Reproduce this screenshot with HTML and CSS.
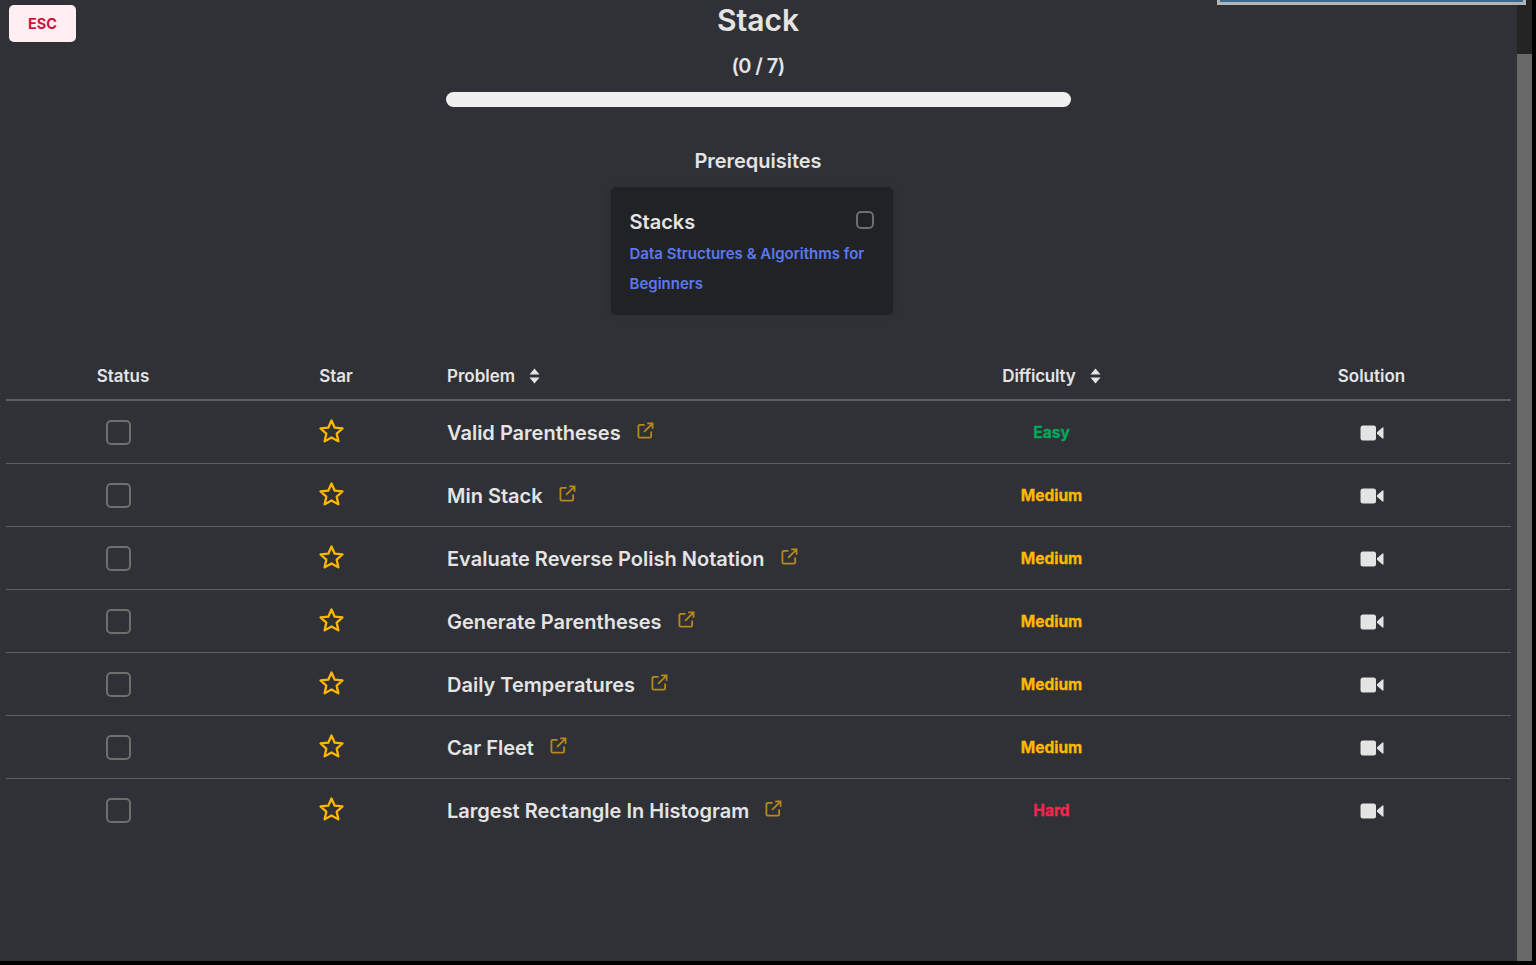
FILE: index.html
```html
<!DOCTYPE html>
<html lang="en">
<head>
    <meta charset="UTF-8">
    <title>Stack</title>
    <link rel="stylesheet" href="styles.css">
</head>
<body>
    <svg class="sprites" width="0" height="0">
        <symbol id="star" viewBox="0 0 26 26">
            <path d="M13 2.400l3.100 6.900 7.500.8-5.600 5 1.600 7.400-6.600-3.800-6.600 3.800 1.600-7.400-5.600-5 7.500-.8z" fill="none" stroke="#ffb800" stroke-width="2.200" stroke-linejoin="round"/>
        </symbol>
        <symbol id="link" viewBox="0 0 18 18">
            <path d="M8 3H3a1.500 1.500 0 0 0-1.500 1.500v10.500A1.500 1.500 0 0 0 3 16.500h10.500A1.500 1.500 0 0 0 15 15v-5M7.500 10.500L16 2M10.800 1.500h5.700v5.700" fill="none" stroke="#b8881c" stroke-width="1.900"/>
        </symbol>
        <symbol id="video" viewBox="0 0 24 16">
            <rect x="0.500" y="0.500" width="15.500" height="15" rx="2.500" fill="#e4e4e4"/>
            <path d="M17 7.300L22.500 2.500c.5-.4 1-.2 1 .5v10c0 .7-.5.9-1 .5L17 8.700z" fill="#e4e4e4"/>
        </symbol>
        <symbol id="sort" viewBox="0 0 11 16">
            <path d="M5.500 0.500L10.500 6.500H0.500zM5.500 15.500L0.500 9.500H10.500z" fill="#e4e4e4"/>
        </symbol>
    </svg>

    <div class="window">
        <div class="content">
            <div class="topbox"></div>
            <button class="esc">ESC</button>

            <h1>Stack</h1>
            <p class="count">(0 / 7)</p>
            <div class="progress"></div>

            <h2>Prerequisites</h2>
            <div class="cards">
                <div class="card">
                    <div class="card-head">
                        <span>Stacks</span>
                        <span class="check small"></span>
                    </div>
                    <a class="card-link">Data Structures &amp; Algorithms for Beginners</a>
                </div>
            </div>

            <table>
                <thead>
                    <tr>
                        <th class="col-status">Status</th>
                        <th class="col-star">Star</th>
                        <th class="col-problem">Problem <svg class="sort"><use href="#sort"/></svg></th>
                        <th class="col-diff">Difficulty <svg class="sort"><use href="#sort"/></svg></th>
                        <th class="col-sol">Solution</th>
                    </tr>
                </thead>
                <tbody>
                    <tr>
                        <td class="cell-status"><span class="check"></span></td>
                        <td class="cell-star"><svg class="star"><use href="#star"/></svg></td>
                        <td class="cell-problem">Valid Parentheses <svg class="link"><use href="#link"/></svg></td>
                        <td class="cell-diff easy">Easy</td>
                        <td class="cell-sol"><svg class="video"><use href="#video"/></svg></td>
                    </tr>
                    <tr>
                        <td class="cell-status"><span class="check"></span></td>
                        <td class="cell-star"><svg class="star"><use href="#star"/></svg></td>
                        <td class="cell-problem">Min Stack <svg class="link"><use href="#link"/></svg></td>
                        <td class="cell-diff medium">Medium</td>
                        <td class="cell-sol"><svg class="video"><use href="#video"/></svg></td>
                    </tr>
                    <tr>
                        <td class="cell-status"><span class="check"></span></td>
                        <td class="cell-star"><svg class="star"><use href="#star"/></svg></td>
                        <td class="cell-problem">Evaluate Reverse Polish Notation <svg class="link"><use href="#link"/></svg></td>
                        <td class="cell-diff medium">Medium</td>
                        <td class="cell-sol"><svg class="video"><use href="#video"/></svg></td>
                    </tr>
                    <tr>
                        <td class="cell-status"><span class="check"></span></td>
                        <td class="cell-star"><svg class="star"><use href="#star"/></svg></td>
                        <td class="cell-problem">Generate Parentheses <svg class="link"><use href="#link"/></svg></td>
                        <td class="cell-diff medium">Medium</td>
                        <td class="cell-sol"><svg class="video"><use href="#video"/></svg></td>
                    </tr>
                    <tr>
                        <td class="cell-status"><span class="check"></span></td>
                        <td class="cell-star"><svg class="star"><use href="#star"/></svg></td>
                        <td class="cell-problem">Daily Temperatures <svg class="link"><use href="#link"/></svg></td>
                        <td class="cell-diff medium">Medium</td>
                        <td class="cell-sol"><svg class="video"><use href="#video"/></svg></td>
                    </tr>
                    <tr>
                        <td class="cell-status"><span class="check"></span></td>
                        <td class="cell-star"><svg class="star"><use href="#star"/></svg></td>
                        <td class="cell-problem">Car Fleet <svg class="link"><use href="#link"/></svg></td>
                        <td class="cell-diff medium">Medium</td>
                        <td class="cell-sol"><svg class="video"><use href="#video"/></svg></td>
                    </tr>
                    <tr>
                        <td class="cell-status"><span class="check"></span></td>
                        <td class="cell-star"><svg class="star"><use href="#star"/></svg></td>
                        <td class="cell-problem">Largest Rectangle In Histogram <svg class="link"><use href="#link"/></svg></td>
                        <td class="cell-diff hard">Hard</td>
                        <td class="cell-sol"><svg class="video"><use href="#video"/></svg></td>
                    </tr>
                </tbody>
            </table>
        </div>
        <div class="scrollbar"><div class="thumb"></div></div>
    </div>
</body>
</html>
```

FILE: styles.css
```css
html, body {
    height: 100%;
}
body {
    margin: 0;
    background-color: #000;
    font-family: Inter, "Noto Sans", sans-serif;
    color: #e4e4e4;
    overflow: hidden;
}
.sprites {
    position: absolute;
}
.window {
    display: flex;
    width: 1532px;
    height: 961px;
}
.content {
    position: relative;
    flex: 1;
    background-color: #303136;
    padding: 0 6px;
    text-align: center;
}
.scrollbar {
    width: 15px;
    background-color: #242424;
    padding-top: 54px;
    box-sizing: border-box;
}
.thumb {
    height: 100%;
    background-color: #686868;
}
.topbox {
    position: absolute;
    top: 0;
    left: 1217px;
    width: 303px;
    height: 2px;
    border: 3px solid #b4b4b4;
    border-top: none;
    background-color: #3b6a90;
}
.esc {
    position: absolute;
    top: 5px;
    left: 9px;
    width: 67px;
    height: 37px;
    background-color: #ffeef2;
    color: #d2123c;
    border: none;
    border-radius: 5px;
    font-family: inherit;
    font-size: 14.5px;
    font-weight: 700;
}
h1 {
    margin: 0;
    padding: 2px 1px 0 0;
    font-size: 30px;
    line-height: 36px;
    font-weight: 600;
}
.count {
    margin: 16px 0 0;
    padding-right: 1px;
    font-size: 20px;
    line-height: 24px;
    font-weight: 600;
    letter-spacing: -0.6px;
}
.progress {
    width: 625px;
    height: 15px;
    margin: 14px auto 0;
    border-radius: 8px;
    background-color: #f0f0f0;
}
h2 {
    margin: 42px 0 0;
    padding-right: 1px;
    font-size: 20px;
    line-height: 24px;
    font-weight: 600;
    letter-spacing: -0.02px;
}
.cards {
    display: flex;
    justify-content: center;
    padding-right: 14px;
    margin-top: 14px;
}
.card {
    width: 282px;
    height: 128px;
    box-sizing: border-box;
    padding: 20px 19px;
    background-color: #212226;
    border-radius: 5px;
    box-shadow: 0 0 8px rgba(0, 0, 0, 0.08);
    text-align: left;
}
.card-head {
    display: flex;
    justify-content: space-between;
    font-size: 20px;
    line-height: 30px;
    font-weight: 600;
}
.card-link {
    display: block;
    padding-top: 2px;
    font-size: 15px;
    line-height: 30px;
    font-weight: 600;
    color: #5b78f0;
}
.check {
    display: inline-block;
    width: 21px;
    height: 21px;
    border: 2px solid #6e6e6e;
    border-radius: 5px;
    margin-right: 9px;
    vertical-align: middle;
}
.check.small {
    width: 14px;
    height: 14px;
    margin: 4px 0 0;
}
table {
    width: 1505px;
    margin-top: 36px;
    border-collapse: collapse;
    table-layout: fixed;
}
th {
    height: 49px;
    box-sizing: border-box;
    padding: 2px 0 0;
    border-bottom: 2px solid #5f5f5f;
    font-size: 17px;
    font-weight: 600;
}
td {
    height: 63px;
    box-sizing: border-box;
    padding: 0;
    border-bottom: 1px solid #5f5f5f;
    text-align: center;
}
tbody tr:last-child td {
    border-bottom: none;
}
.col-status { width: 234px; }
.col-star { width: 192px; }
.col-problem { width: 439px; }
.col-diff {
    width: 361px;
    letter-spacing: -0.2px;
}
.col-problem, .cell-problem {
    padding-left: 15px;
    text-align: left;
}
.cell-status {
    padding-top: 2px;
}
.cell-problem {
    padding-top: 2px;
    font-size: 20px;
    font-weight: 600;
}
.cell-diff {
    padding-top: 2px;
    font-size: 15.5px;
    font-weight: 700;
    -webkit-text-stroke: 0.3px;
}
.easy { color: #00a85a; }
.medium { color: #ffb800; }
.hard { color: #f6264f; }
.sort {
    width: 11px;
    height: 16px;
    margin-left: 10px;
    vertical-align: -2px;
}
.star {
    width: 27px;
    height: 27px;
    margin-right: 10px;
    vertical-align: middle;
}
.link {
    width: 17px;
    height: 17px;
    margin-left: 11px;
    vertical-align: 1px;
}
.video {
    width: 24px;
    height: 16px;
    margin-left: 1px;
    vertical-align: middle;
}
```
